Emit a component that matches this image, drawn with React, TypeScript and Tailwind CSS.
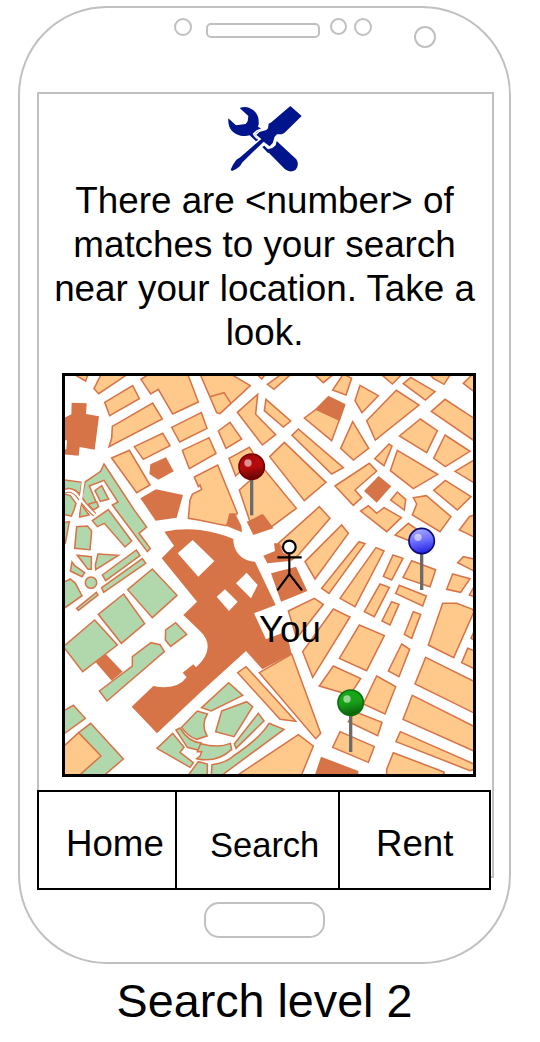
type Sheet = { x: number; y: number; homes?: string[]; parks?: string[]; civic?: string[] };

const sheets: Sheet[] = [
  {
    x: 0,
    y: 0,
    homes: [
      '40,12 77,33 84,12',
      '124,12 102,56 116,71 204,12',
      '134,97 218,47 238,86 149,137',
      '157,169 278,99 307,147 147,230 155,205',
      '155,264 208,241 270,345 230,368',
      '223,230 308,190 330,227 250,268',
      '243,28 272,72 295,58 338,132 415,96 383,12 268,12',
      '335,172 424,128 441,175 359,216',
      '367,241 447,203 468,250 388,296',
      '403,321 473,285 532,430 498,467 420,451 385,445 390,390 397,373 425,358 420,345 415,350',
    ],
    civic: [
      '35,98 80,100 78,132 117,139 104,239 59,231 56,257 10,253 10,238 19,238 21,211 10,211 10,145 34,133',
      '271,283 318,262 341,304 295,329 268,312',
      '241,385 288,358 369,375 350,443 287,452',
    ],
    parks: [
      '132,282 224,422 260,471 237,490 271,535 262,545 172,425 157,405 174,396 132,331 88,348 112,405 97,418 85,415 66,380 75,336 122,304',
      '105,362 125,347 146,388 121,394',
      '10,329 66,337 60,372 44,360 25,355 10,362',
      '10,372 30,376 48,400 42,420 34,438 10,433',
    ],
  },
  {
    x: 420,
    y: 0,
    homes: [
      '0,12 50,128 60,131 151,47 92,12',
      '112,127 173,73 167,133 227,194 187,225',
      '193,122 198,88 272,153 250,171',
      '170,12 185,27 197,12',
      '202,43 245,12 274,12 222,58',
      '342,12 370,38 402,12',
      '398,60 438,75 455,25 430,12',
      '55,183 90,157 125,207 78,235',
      '87,265 148,232 168,262 107,318',
      '118,360 190,295 289,415 215,470 185,435 150,455',
      '209,260 253,217 378,337 313,392',
      '276,196 295,177 430,293 395,312',
      '313,144 348,118 418,150 395,212',
    ],
    civic: ['345,118 385,77 437,103 420,152'],
  },
  {
    x: 840,
    y: 0,
    homes: [
      '60,46 115,77 66,128 45,92',
      '80,152 169,61 237,105 106,210',
      '122,12 157,42 187,12',
      '190,41 212,22 285,65 256,90',
      '268,12 280,25 312,43 332,12',
      '370,40 395,15 402,15 402,65',
      '274,124 315,88 402,145 402,212',
      '38,155 86,235 40,270 2,235',
      '178,198 241,147 292,182 260,248',
      '315,195 390,244 316,290 281,265',
      '104,266 147,222 156,228 132,287',
      '172,241 293,313 220,356 151,302',
      '345,304 402,270 402,338',
      '-15,348 88,280 110,303 45,360 65,383 40,406',
      '220,383 259,377 333,440 300,485 217,435 230,402',
      '152,390 172,366 197,388 193,420',
      '281,361 316,331 393,380 352,420',
      '62,423 85,407 110,430 132,413 184,443 140,485',
    ],
    civic: ['72,363 116,318 154,349 110,398'],
  },
  {
    x: 0,
    y: 405,
    parks: [
      '97,47 145,14 215,108 195,126 133,55 112,65',
      '50,65 82,63 95,78 90,134 44,130',
      '10,52 28,50 16,115 10,120',
      '62,-5 87,30 59,36',
      '84,-2 100,15 116,5 110,-10',
      '52,151 94,155 94,193 84,193',
      '114,147 175,151 107,194 106,180',
      '36,171 44,182 74,203 66,215 31,198',
      '127,210 229,135 240,152 137,227',
      '125,248 247,161 257,175 131,262',
      '50,310 109,262 114,270 55,316',
      '10,232 31,222 46,235 66,272 10,312',
      '203,254 277,192 351,271 277,338',
      '115,328 191,267 254,356 184,415',
      '347,353 380,388 332,424 316,405 317,375',
    ],
  },
  {
    x: 420,
    y: 405,
    homes: [
      '235,115 358,5 390,40 295,150 275,165',
      '315,170 425,60 445,85 345,222',
      '265,318 343,280 370,298 290,400',
    ],
    civic: [
      '78,62 88,25 105,25 124,62 126,82',
      '140,50 190,28 220,70 160,90',
      '190,152 225,138 222,115 236,115 250,143 274,157 270,168 202,175',
      '213,205 288,185 322,258 243,290',
    ],
  },
  {
    x: 840,
    y: 405,
    homes: [
      '-55,250 57,110 75,116 -33,265',
      '0,280 108,128 132,138 45,305',
      '159,150 189,160 155,225 130,214',
      '120,237 148,247 103,335 73,320',
      '155,290 177,298 150,360 126,348',
      '220,320 242,328 215,400 193,388',
      '178,241 259,273 248,303 167,265',
      '215,167 287,194 270,245 189,218',
      '165,90 205,55 240,80 240,120',
      '358,75 388,35 402,30 402,96',
      '353,173 370,155 402,162 402,198',
      '338,207 390,221 362,262 320,253',
      '388,270 402,245 402,275',
      '308,295 350,295 398,313 402,320 341,458 265,420',
      '402,380 393,400 402,406',
      '-20,312 30,336 -82,517 -112,440',
      '58,360 133,392 80,497 -2,460',
    ],
  },
  {
    x: 0,
    y: 810,
    parks: [
      '10,20 104,-60 172,15 68,95',
      '118,153 217,78 217,50 273,8 300,14 313,35 141,183',
      '10,213 40,196 76,235 10,283',
      '56,278 92,250 190,357 135,404 60,404',
      '291,325 338,280 372,322 360,337 400,368 390,382',
      '386,404 415,365 442,372 442,404',
    ],
    homes: ['10,320 56,278 123,348 60,404 10,404'],
    civic: ['107,67 137,42 188,95 155,122'],
  },
  {
    x: 420,
    y: 810,
    homes: [
      '178,98 275,42 362,280 347,296',
      '113,98 138,80 287,244 240,238',
      '115,404 295,284 340,318 305,404',
    ],
    parks: [
      '5,203 86,128 128,166 34,213',
      '65,213 140,185 158,200 102,290 47,275',
      '175,220 192,243 108,325 103,312',
    ],
  },
  {
    x: 840,
    y: 810,
    homes: [
      '185,12 209,28 177,110 145,93',
      '-62,138 -20,78 62,116 30,165',
      '110,108 167,140 135,222 70,192',
      '25,245 45,215 126,247 113,287',
      '-22,322 0,275 103,320 85,367',
      '257,52 402,124 402,219 225,132',
      '217,166 402,259 402,333 189,238',
      '181,275 402,372 402,388 390,392 168,305',
      '160,338 312,396 312,404 140,404 140,388',
      '383,25 402,32 402,86 365,68',
    ],
    civic: ['-57,350 55,393 55,404 -75,404'],
  },
];

function Blocks({ sheet }: { sheet: Sheet }) {
  return (
    <g transform={`translate(${sheet.x} ${sheet.y})`} strokeWidth="4.6">
      {sheet.parks?.map((p) => <polygon key={p} points={p} fill="#b1d8ad" stroke="#d77447" />)}
      {sheet.homes?.map((p) => <polygon key={p} points={p} fill="#ffc98b" stroke="#d77447" />)}
      {sheet.civic?.map((p) => <polygon key={p} points={p} fill="#d77447" />)}
    </g>
  );
}

function Pin({ x, y, tip, fill, edge }: { x: number; y: number; tip: number; fill: string; edge: string }) {
  return (
    <g>
      <path d={`M${x} ${y + 30}V${tip}`} stroke="#6b6b6b" strokeWidth="10" />
      <circle cx={x} cy={y} r="38" fill={`url(#${fill})`} stroke={edge} strokeWidth="5" />
      <circle cx={x - 11} cy={y - 11} r="11" fill="#fff" opacity="0.55" />
    </g>
  );
}

function Ball({ id, light, mid, dark }: { id: string; light: string; mid: string; dark: string }) {
  return (
    <linearGradient id={id} x1="0.4" y1="0" x2="0.6" y2="1">
      <stop offset="0" stopColor={light} />
      <stop offset="0.5" stopColor={mid} />
      <stop offset="1" stopColor={dark} />
    </linearGradient>
  );
}

function CityMap() {
  return (
    <svg viewBox="15 18 1224 1194" preserveAspectRatio="none" className="block h-full w-full">
      <defs>
        <Ball id="red" light="#a80808" mid="#b80b0b" dark="#5c0505" />
        <Ball id="blue" light="#a9a9ff" mid="#6a6aff" dark="#2020e0" />
        <Ball id="green" light="#18a818" mid="#18a018" dark="#0b5a0b" />
      </defs>
      {sheets.map((s) => <Blocks key={`${s.x}-${s.y}`} sheet={s} />)}
      <path d="M450 80L492 68L513 100" fill="none" stroke="#d77447" strokeWidth="4.6" />
      <circle cx="93" cy="638" r="17" fill="#b1d8ad" stroke="#d77447" strokeWidth="4.6" />
      <path d="M10 366Q36 352 56 380T104 434" fill="none" stroke="#d77447" strokeWidth="14" />
      <path d="M10 366Q36 352 56 380T104 434" fill="none" stroke="#fff" strokeWidth="7" />
      <path d="M70 330L63 385L48 445" fill="none" stroke="#fff" strokeWidth="8" />
      <path
        d="M313 485Q365 474 420 480Q475 487 520 507C520 545 545 573 585 575L647 705L582 730L618 808L665 790L685 810L695 852L607 898L558 843L420 968L291 1090L215 1010L280 948Q350 962 380 922L368 908L400 883L408 892Q443 860 443 830Q443 805 420 783L370 735L411 695L305 565L342 527Z M353 550L398 510L463 573L415 620Z M528 640L560 608L593 645L573 685Z M470 680L495 658L533 695L507 723Z"
        fill="#d77447"
        fillRule="evenodd"
      />
      <g fill="#b1d8ad" stroke="#d77447" strokeWidth="4.6">
        <path d="M365 1072L412 1023L442 1032Q422 1065 441 1098L410 1108Q382 1098 365 1072Z" />
        <path d="M348 1080L360 1074Q385 1116 424 1119L422 1142L382 1132Z" />
        <path d="M422 1121Q475 1135 511 1120L515 1138Q470 1180 410 1166L420 1158L425 1145L412 1145Z" />
        <path d="M627 1060L672 1078L488 1214L454 1214L456 1184Q500 1178 520 1158Q600 1105 627 1060Z" />
      </g>
      <Pin x={575} y={290} tip={436} fill="red" edge="#700" />
      <Pin x={1085} y={513} tip={660} fill="blue" edge="#0a0a78" />
      <Pin x={872} y={998} tip={1146} fill="green" edge="#087008" />
      <g fill="none" stroke="#000" strokeWidth="6.5">
        <circle cx="688" cy="531" r="19" fill="#fff" />
        <path d="M688 551V612M652 562H725M652 661L688 612L726 661" />
      </g>
    </svg>
  );
}

function ToolsIcon() {
  return (
    <svg viewBox="84 46 222 198" className="block h-[66px] w-[74px]" fill="#00148c">
      <path d="M119 52Q133 47 147 51Q179 64 176 101L174 108L187 116Q173 121 164 130L174 148L168 152L149 134Q137 138 122 135Q82 125 85 83L108 104L137 100L143 92L145 76Z" />
      <path d="M271 46L305 76L253 127L245 131H231L224 138L218 157L209 167L191 153L126 216Q121 231 96 241L92 237Q105 205 119 201L184 145L169 133L178 124L199 118L204 113L206 99L214 95Z" />
      <path d="M187 169L193 165L204 176L217 172L227 164L230 151L289 206Q299 223 287 237Q272 248 255 236L207 187L203 186Z" />
      <path d="M172 143L163 134L161 130L171 121L187 114" fill="none" stroke="#fff" strokeWidth="5" />
    </svg>
  );
}

export default function App() {
  return (
    <main className="flex h-[1042px] w-[540px] flex-col overflow-hidden bg-white pl-[18px] pt-[6px] font-['Liberation_Sans',Arial,sans-serif] text-black">
      <section className="flex h-[958px] w-[493px] shrink-0 flex-col rounded-[89px] border-[2px] border-[#c0c0c0]">
        <header className="flex h-[84px] shrink-0 items-start pl-[154px] pt-[10px]">
          <i className="size-[18px] rounded-full border-[2px] border-[#c0c0c0]" />
          <i className="ml-[14px] mt-[5px] h-[15px] w-[114px] rounded-[5px] border-[2px] border-[#c0c0c0]" />
          <i className="ml-[10px] size-[17px] rounded-full border-[2px] border-[#c0c0c0]" />
          <i className="ml-[7px] size-[18px] rounded-full border-[2px] border-[#c0c0c0]" />
          <i className="ml-[42px] mt-[8px] size-[22px] rounded-full border-[2px] border-[#c0c0c0]" />
        </header>

        <div className="ml-[17px] flex h-[786px] w-[457px] shrink-0 flex-col border-[2px] border-[#c0c0c0]">
          <div className="flex h-[85px] shrink-0 pl-[189px] pt-[12px]">
            <ToolsIcon />
          </div>
          <p className="w-[451px] shrink-0 whitespace-nowrap text-center text-[36.8px] leading-[44px]">
            There are &lt;number&gt; of
            <br />
            matches to your search
            <br />
            near your location. Take a
            <br />
            look.
          </p>
          <div className="relative ml-[23px] mt-[18px] h-[404px] w-[414px] shrink-0 border-[3px] border-black">
            <CityMap />
            <span className="absolute left-[194px] top-[232px] text-[36.67px] leading-[44px]">You</span>
          </div>
          <nav className="-ml-[2px] mt-[13px] flex h-[100px] w-[454px] shrink-0 border-[2.5px] border-black bg-white text-[36.67px] leading-[44px]">
            <span className="flex w-[138px] items-center border-r-[2px] border-black pl-[27px] pt-[8px]">Home</span>
            <span className="flex w-[163px] items-center border-r-[2px] border-black pl-[33px] pt-[10px] text-[34.5px]">Search</span>
            <span className="flex flex-1 items-center pl-[36px] pt-[8px]">Rent</span>
          </nav>
        </div>

        <div className="ml-[184px] mt-[24px] h-[36px] w-[121px] shrink-0 rounded-[15px] border-[2px] border-[#c0c0c0]" />
      </section>
      <h1 className="mt-[9px] w-[493px] text-center text-[46.7px] leading-[56px]">Search level 2</h1>
    </main>
  );
}
